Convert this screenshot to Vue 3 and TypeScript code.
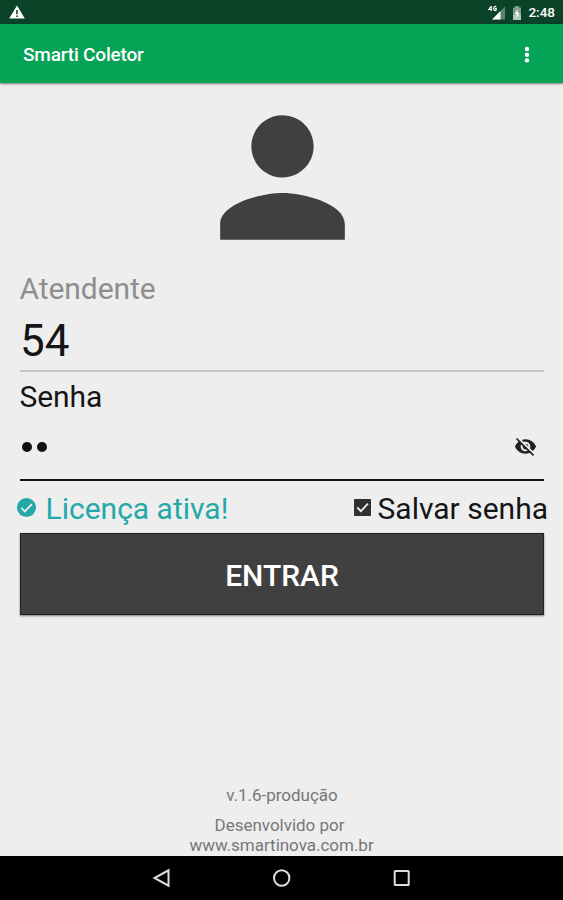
<script setup lang="ts">
import { computed, ref } from 'vue'

const attendant = ref<string>('54')
const password = ref<string>('54')
const saveMe = ref<boolean>(true)
const masked = computed<number>(() => password.value.length)
</script>

<template>
  <div class="screen">
    <div class="status">
      <svg class="warn" viewBox="0 0 16 14"><path d="M8 .4 15.8 13.6H.2z" fill="#fff" /><path d="M8 5v4.2M8 10.4v1.6" stroke="#0a4327" stroke-width="1.6" /></svg>
      <div class="status-right">
        <svg class="signal" viewBox="0 0 18 16">
          <path d="M17 1.500V14.500H4z" fill="#5c8570" />
          <path d="M12.500 6V14.500H4z" fill="#fff" />
          <path d="M3.200 1v5M3.400 1 .8 4.500h3.400M8.200 2.200C7.500 1 5.600 1.200 5.600 3.500S7.800 6 8.200 4.800V3.700H6.900" fill="none" stroke="#fff" stroke-width="1.200" />
        </svg>
        <svg class="battery" viewBox="0 0 10 16"><path d="M3 1h4v1.500h2V15H1V2.500h2z" fill="#7d9f8b" /><path d="M1 10h8v5H1z" fill="#b5c9bc" /><path d="M5.700 4 2.600 9h2v4L7.700 8h-2z" fill="#fff" /></svg>
        <span class="clock">2:48</span>
      </div>
    </div>
    <header class="appbar">
      <h1>Smarti Coletor</h1>
      <svg class="more" viewBox="0 0 6 18"><circle cx="3" cy="3" r="2.200" /><circle cx="3" cy="8.700" r="2.200" /><circle cx="3" cy="14.400" r="2.200" /></svg>
    </header>
    <main>
      <svg class="person" viewBox="0 0 24 24"><path d="M12 12c2.210 0 4-1.790 4-4s-1.790-4-4-4-4 1.790-4 4 1.790 4 4 4zm0 2c-2.670 0-8 1.340-8 4v2h16v-2c0-2.660-5.330-4-8-4z" /></svg>
      <div class="label hint">Atendente</div>
      <div class="field user">{{ attendant }}</div>
      <div class="label pass-label">Senha</div>
      <div class="field pass">
        <span class="dots"><i v-for="n in masked" :key="n" /></span>
        <svg class="eye" viewBox="0 0 24 24"><path d="M12 7c2.760 0 5 2.240 5 5 0 .650-.130 1.260-.360 1.830l2.920 2.920c1.510-1.260 2.700-2.890 3.430-4.750-1.730-4.390-6-7.500-11-7.500-1.400 0-2.740.250-3.980.700l2.160 2.160C10.740 7.130 11.350 7 12 7zM2 4.270l2.280 2.280.460.460C3.080 8.300 1.780 10.020 1 12c1.730 4.390 6 7.500 11 7.500 1.550 0 3.030-.300 4.380-.840l.420.420L19.730 22 21 20.730 3.270 3 2 4.270zM7.530 9.800l1.550 1.550c-.050.210-.080.430-.080.650 0 1.660 1.340 3 3 3 .220 0 .440-.030.650-.080l1.550 1.550c-.670.330-1.410.530-2.200.530-2.760 0-5-2.240-5-5 0-.790.200-1.530.530-2.200zm4.310-.780 3.150 3.150.020-.160c0-1.660-1.340-3-3-3l-.170.010z" /></svg>
      </div>
      <div class="options">
        <div class="license">
          <svg class="check" viewBox="0 0 20 20"><circle cx="10" cy="10" r="10" fill="#24a9a9" /><path d="m4.500 10.500 3.700 3.700 7.500-7.800" fill="none" stroke="#eee" stroke-width="1.900" /></svg>
          <span>Licença ativa!</span>
        </div>
        <div class="save" @click="saveMe = !saveMe">
          <svg class="box" viewBox="0 0 18 18"><rect width="18" height="18" rx="1" fill="#303030" /><path v-if="saveMe" d="m3.500 9 3.800 3.900 7.500-8" fill="none" stroke="#eee" stroke-width="1.900" /></svg>
          <span>Salvar senha</span>
        </div>
      </div>
      <button class="enter">ENTRAR</button>
      <footer>
        <p class="version">v.1.6-produção</p>
        <p class="credit">Desenvolvido por</p>
        <p class="site">www.smartinova.com.br</p>
      </footer>
    </main>
    <nav>
      <svg viewBox="0 0 20 20"><path d="M16.500 2.300v15.400L2.500 10z" /></svg>
      <svg viewBox="0 0 20 20"><circle cx="9.700" cy="10" r="7.700" /></svg>
      <svg viewBox="0 0 20 20"><rect x="2.700" y="3" width="14" height="14" rx=".5" /></svg>
    </nav>
  </div>
</template>

<style>
body { background: #eee; }
</style>

<style scoped>
.screen { display: flex; flex-direction: column; height: 900px; background: #eee; font-family: Roboto, sans-serif; color: #151515; overflow: hidden; }
.status { display: flex; justify-content: space-between; align-items: center; height: 24px; flex: none; background: #0a4327; padding: 0 8px 0 9px; }
.warn { width: 16px; height: 14px; }
.status-right { display: flex; align-items: center; }
.signal { width: 18px; height: 16px; margin: 1px 6px 0 0; }
.battery { width: 10px; height: 16px; margin: 1px 6px 0 0; }
.clock { color: #fff; font-weight: 500; font-size: 13.500px; line-height: 16px; }
.appbar { display: flex; align-items: center; justify-content: space-between; height: 59px; flex: none; background: #04a355; padding: 0 33px 0 23px; box-shadow: 0 1px 2px rgba(0, 0, 0, .5); }
h1 { margin: 3px 0 0; font-size: 19px; letter-spacing: -.18px; line-height: 22px; font-weight: 500; color: #fff; }
.more { width: 6px; height: 18px; fill: #fff; margin-top: 2px; }
main { flex: 1; display: flex; flex-direction: column; min-height: 0; padding: 1px 19px 0 20px; }
.person { width: 187px; height: 187px; align-self: center; flex: none; fill: #404040; margin-right: 0; }
.label { font-size: 30px; line-height: 35px; flex: none; letter-spacing: -.05px; margin-left: -.6px; }
.hint { color: #8e8e8e; }
.user { height: 64px; font-size: 44px; line-height: 71px; border-bottom: 2px solid #c5c5c5; flex: none; }
.pass-label { margin-top: 7px; }
.pass { display: flex; justify-content: space-between; align-items: center; height: 65px; border-bottom: 2px solid #111; flex: none; padding: 0 7px 0 2px; }
.dots { display: flex; gap: 5px; padding-top: 1px; }
.dots i { width: 10px; height: 10px; border-radius: 50%; background: #111; }
.eye { width: 23px; height: 23px; fill: #222; }
.options { display: flex; justify-content: space-between; height: 52px; margin: 0 -4px 0 -3px; font-size: 30px; line-height: 35px; flex: none; }
.license, .save { display: flex; align-items: center; white-space: nowrap; }
.license span, .save span { padding-top: 2px; }
.license { color: #24a9a9; }
.check { width: 19px; height: 19px; margin: 0 9.500px 0 0; }
.box { width: 17px; height: 17px; margin: 0 7px 0 0; }
.enter { height: 82px; flex: none; border: 1px solid #222; background: #404040; color: #fff; font: 500 30px/35px Roboto, sans-serif; padding: 2px 0 0; box-shadow: 0 1px 2px rgba(0, 0, 0, .5); }
footer { margin-top: auto; padding-bottom: 1px; text-align: center; color: #777; font-size: 17px; line-height: 20px; letter-spacing: -.02px; }
footer p { margin: 0; }
footer .version { margin-bottom: 10px; }
footer .credit { padding-right: 5px; }
footer .site { padding-right: 1px; }
nav { display: flex; align-items: center; justify-content: center; gap: 100px; height: 44px; flex: none; background: #000; }
nav svg { width: 20px; height: 20px; fill: none; stroke: #ddd; stroke-width: 2; }
</style>
